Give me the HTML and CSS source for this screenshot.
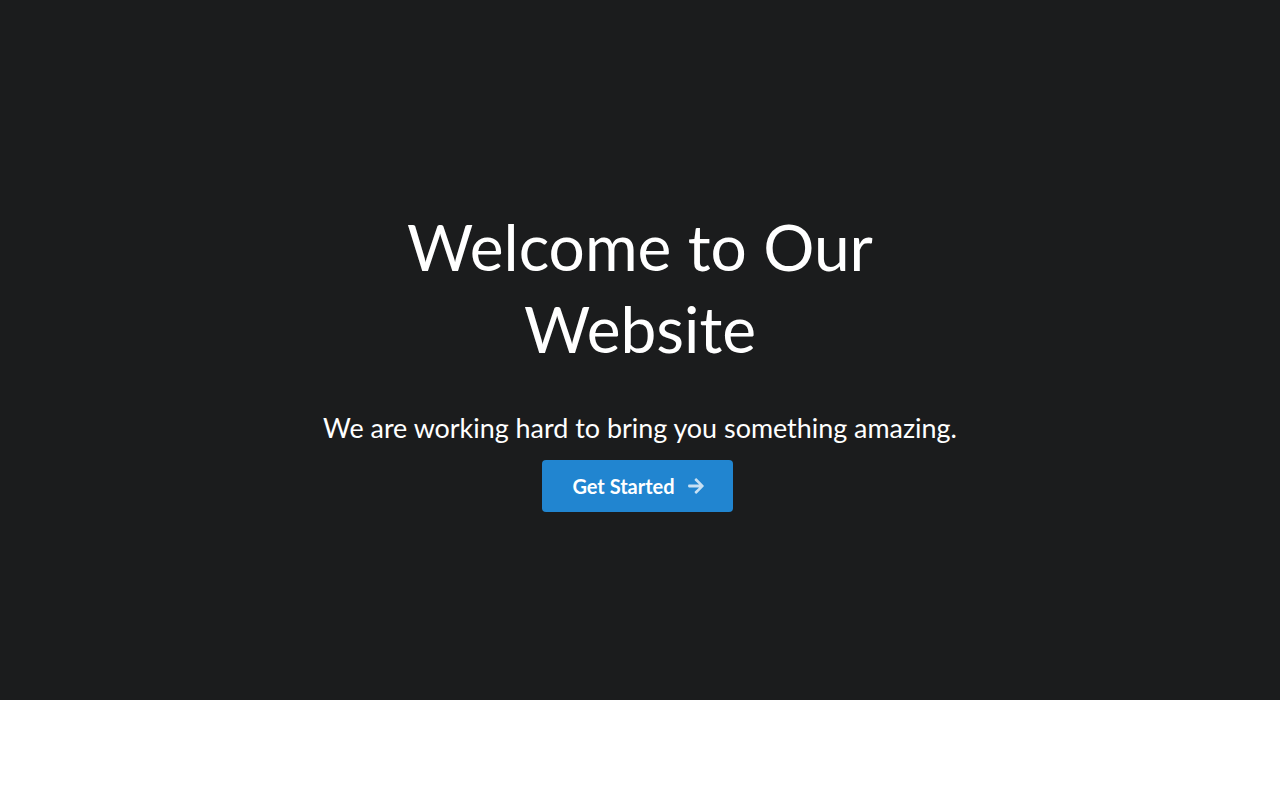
FILE: index.html
```html
<!DOCTYPE html>
<html lang="en">
<head>
  <meta charset="UTF-8">
  <title>Welcome</title>
  <link rel="stylesheet" href="styles.css">
</head>
<body>
  <div class="masthead">
    <div class="text-container">
      <h1 class="title">Welcome to Our Website</h1>
      <h2 class="subtitle">We are working hard to bring you something amazing.</h2>
      <button class="btn-primary">
        Get Started
        <svg class="arrow" viewBox="0 0 448 512" width="18" height="18">
          <path fill="currentColor" d="M190.5 66.9l22.2-22.2c9.4-9.4 24.6-9.4 33.9 0L441 239c9.4 9.4 9.4 24.6 0 33.9L246.6 467.3c-9.4 9.4-24.6 9.4-33.9 0l-22.2-22.2c-9.5-9.5-9.3-25 .4-34.3L311.4 296H24c-13.3 0-24-10.7-24-24v-32c0-13.3 10.7-24 24-24h287.4L190.9 101.2c-9.8-9.3-10-24.8-.4-34.3z"/>
        </svg>
      </button>
    </div>
  </div>
</body>
</html>
```

FILE: styles.css
```css
body {
  margin: 0;
  font-family: Lato, 'Open Sans', sans-serif;
  background: #fff;
}

.masthead {
  background: #1b1c1d;
  color: #fff;
  min-height: 700px;
  box-sizing: border-box;
  padding: 16px 0;
}

.text-container {
  max-width: 700px;
  margin: 0 auto;
  text-align: center;
}

.title {
  font-size: 64px;
  font-weight: normal;
  line-height: 1.2857;
  margin: 190px 0 0;
}

.subtitle {
  font-size: 26.9px;
  font-weight: normal;
  line-height: 1.2857;
  margin: 40px 0 15px;
}

.btn-primary {
  font-family: Lato, sans-serif;
  font-size: 20px;
  font-weight: bold;
  line-height: 1em;
  color: #fff;
  background: #2185d0;
  border: none;
  border-radius: 4px;
  padding: 16px 28px 16px 30px;
  margin-right: 5px;
  cursor: pointer;
  display: inline-flex;
  align-items: center;
  gap: 12px;
}

.arrow {
  opacity: 0.75;
}
```
